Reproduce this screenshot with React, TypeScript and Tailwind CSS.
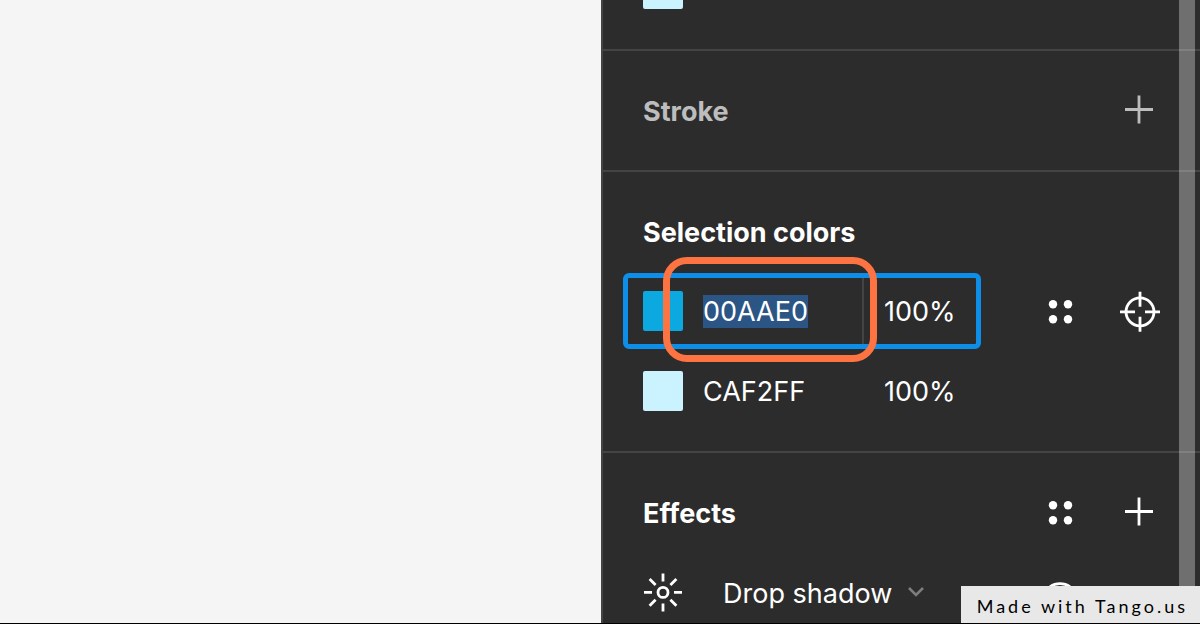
import type { ReactNode } from "react";
import clsx from "clsx";

interface ColorRow {
    hex: string;
    opacity: string;
    swatch: string;
    active: boolean;
}

const selectionColors: ColorRow[] = [
    { hex: "00AAE0", opacity: "100%", swatch: "bg-[#0ba9e0]", active: true },
    { hex: "CAF2FF", opacity: "100%", swatch: "bg-[#caf2ff]", active: false },
];

function PlusIcon() {
    return (
        <svg viewBox="0 0 40 40" className="size-10" fill="none" stroke="currentColor" strokeWidth="2.8">
            <path d="M19 5.5v28M5 19.5h28" />
        </svg>
    );
}

function StylesIcon() {
    return (
        <svg viewBox="0 0 40 40" className="size-10" fill="currentColor">
            <circle cx="13" cy="13.2" r="4.2" />
            <circle cx="28" cy="13.2" r="4.2" />
            <circle cx="13" cy="28.2" r="4.2" />
            <circle cx="28" cy="28.2" r="4.2" />
        </svg>
    );
}

function TargetIcon() {
    return (
        <svg viewBox="0 0 40 40" className="size-10 overflow-visible" fill="none" stroke="currentColor" strokeWidth="2.8">
            <circle cx="20" cy="20.8" r="14" />
            <path d="M20 .8v15M20 25.8v15M0 20.8h15M25 20.8h15" />
        </svg>
    );
}

function SunIcon() {
    return (
        <svg viewBox="0 0 40 40" className="size-10" fill="none" stroke="currentColor" strokeWidth="2.8">
            <circle cx="20" cy="20.4" r="5" />
            <path d="M20 1.4v8M20 31.4v8M1 20.4h8M31 20.4h8M6.600 7l6 6M27.4 27.8l6 6M33.4 7l-6 6M12.6 27.8l-6 6" />
        </svg>
    );
}

function EyeIcon() {
    return (
        <svg viewBox="0 0 40 40" className="size-10" fill="none" stroke="currentColor" strokeWidth="2.8">
            <path d="M4 24C7 16 13 11.6 20 11.6S33 16 36 24" />
            <circle cx="20" cy="25" r="5" />
        </svg>
    );
}

function IconButton({ label, muted, children }: { label: string; muted?: boolean; children: ReactNode }) {
    return (
        <button type="button" aria-label={label} className={clsx("size-10", muted ? "text-[#bdbdbd]" : "text-white")}>
            {children}
        </button>
    );
}

function Section({ children }: { children: ReactNode }) {
    return <section className="shrink-0 border-b-2 border-[#444444] pt-[19px] pr-10 pb-5 pl-5">{children}</section>;
}

function Row({ children }: { children: ReactNode }) {
    return <div className="flex h-20 items-center justify-between">{children}</div>;
}

function Heading({ muted, children }: { muted?: boolean; children: ReactNode }) {
    return (
        <h2 className={clsx("pt-[3px] pl-5 text-[27px] leading-8 font-bold", muted ? "text-[#bdbdbd]" : "text-white")}>
            {children}
        </h2>
    );
}

function ColorField({ color }: { color: ColorRow }) {
    return (
        <div
            className={clsx(
                "relative flex h-[76px] w-[358px] items-center rounded-md border-[5px] pl-[15px]",
                color.active ? "border-[#0d8ee9]" : "border-transparent"
            )}
        >
            <button type="button" aria-label={`Edit ${color.hex}`} className={clsx("size-10 shrink-0 rounded-xs", color.swatch)} />
            <div
                className={clsx(
                    "ml-5 flex w-[161px] shrink-0 items-center self-stretch border-r-2",
                    color.active ? "border-[#444444]" : "border-transparent"
                )}
            >
                <input
                    aria-label="Hex color"
                    defaultValue={color.hex}
                    className={clsx("field-sizing-content h-[33px] pt-[3px] outline-none", color.active && "bg-[#2a5585]")}
                />
            </div>
            <input
                aria-label="Opacity"
                defaultValue={color.opacity}
                className="ml-5 h-[33px] w-20 min-w-0 pt-[3px] outline-none"
            />

            {/* Highlight around the hex value */}
            {color.active && (
                <div className="pointer-events-none absolute -top-[21px] left-[35px] h-[105px] w-[214px] rounded-3xl border-[7px] border-[#fd7341]" />
            )}
        </div>
    );
}

export default function App() {
    return (
        <main className="relative grid h-screen grid-cols-2 gap-0.5 overflow-hidden border-b border-black bg-[#f5f5f5] font-['Inter',sans-serif]">
            <div aria-label="Canvas" />

            <aside className="relative flex min-h-0 flex-col overflow-hidden border-l-2 border-[#444444] bg-[#2c2c2c] text-[27px] text-white">
                <section className="shrink-0 border-b-2 border-[#444444] pb-10 pl-10">
                    <div className="h-[9px] w-10 rounded-b-xs bg-[#caf2ff]" />
                </section>

                <Section>
                    <Row>
                        <Heading muted>Stroke</Heading>
                        <IconButton label="Add stroke" muted>
                            <PlusIcon />
                        </IconButton>
                    </Row>
                </Section>

                <Section>
                    <Row>
                        <Heading>Selection colors</Heading>
                    </Row>
                    {selectionColors.map((color) => (
                        <Row key={color.hex}>
                            <ColorField color={color} />
                            {color.active && (
                                <div className="flex gap-10">
                                    <IconButton label="Color styles">
                                        <StylesIcon />
                                    </IconButton>
                                    <IconButton label="Select all with this color">
                                        <TargetIcon />
                                    </IconButton>
                                </div>
                            )}
                        </Row>
                    ))}
                </Section>

                <Section>
                    <Row>
                        <Heading>Effects</Heading>
                        <div className="flex gap-10">
                            <IconButton label="Effect styles">
                                <StylesIcon />
                            </IconButton>
                            <IconButton label="Add effect">
                                <PlusIcon />
                            </IconButton>
                        </div>
                    </Row>
                    <Row>
                        <div className="flex items-center pl-5">
                            <IconButton label="Effect settings">
                                <SunIcon />
                            </IconButton>
                            <select
                                aria-label="Effect type"
                                className="ml-10 field-sizing-content appearance-none pt-[3px] leading-8 outline-none"
                            >
                                <option>Drop shadow</option>
                            </select>
                            <svg viewBox="0 0 16 10" className="ml-4 h-2.5 w-4" fill="none" stroke="#7d7d7d" strokeWidth="2.6">
                                <path d="M1 1l7 7 7-7" />
                            </svg>
                        </div>
                        <div className="flex gap-10 pr-20">
                            <IconButton label="Toggle visibility">
                                <EyeIcon />
                            </IconButton>
                        </div>
                    </Row>
                </Section>

                {/* Scrollbar thumb */}
                <div className="absolute inset-y-0 right-[5px] w-4 bg-white/32" />
            </aside>

            <a
                href="#tango"
                className="absolute right-0 -bottom-px flex h-[38px] items-center border-b border-[#f5f5f5] bg-[#e8e8e8] pt-0.5 pr-3 pl-4 font-['Lato',sans-serif] text-[18px] leading-6 tracking-[3px] whitespace-nowrap text-black"
            >
                Made with Tango.us
            </a>
        </main>
    );
}
